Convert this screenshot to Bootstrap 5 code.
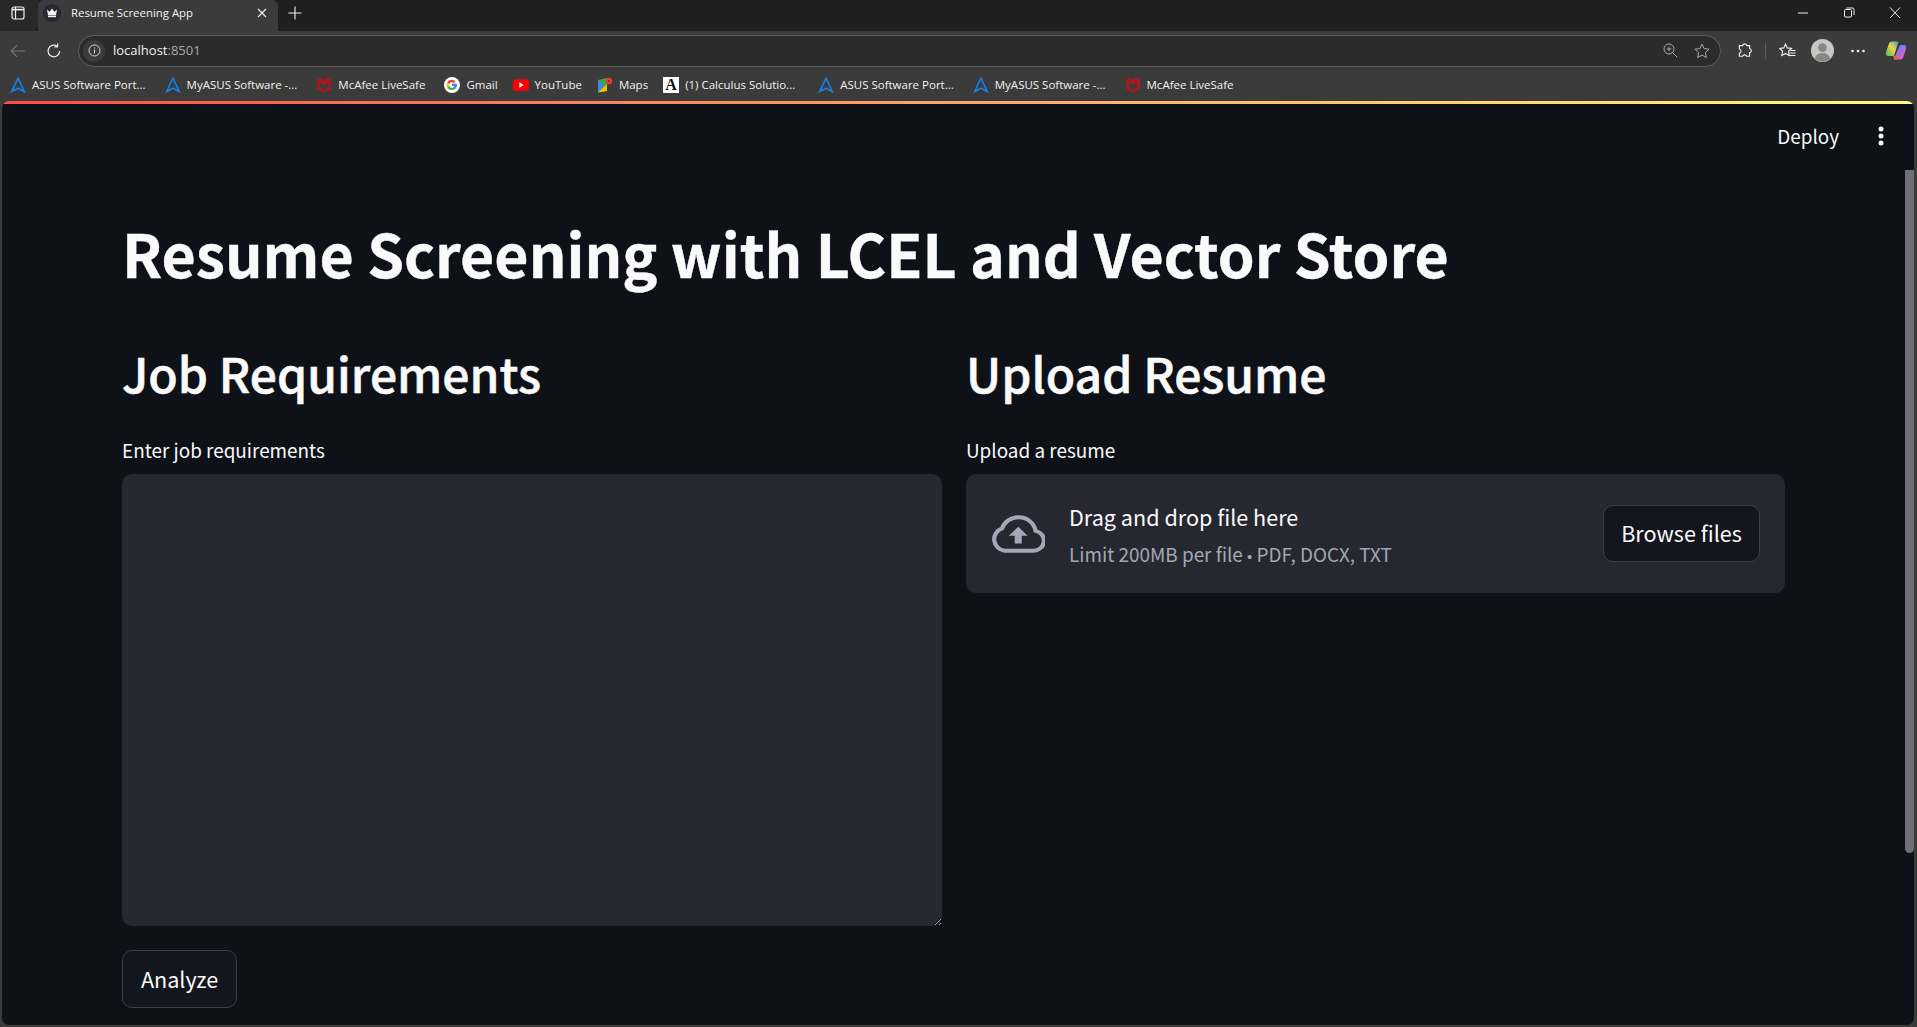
<!DOCTYPE html>
<html lang="en">
<head>
<meta charset="UTF-8">
<title>Resume Screening App</title>
<link rel="stylesheet" href="https://cdn.jsdelivr.net/npm/bootstrap@5.3.0/dist/css/bootstrap.min.css">
<style>
html, body { height: 100%; overflow: hidden; }
body { background: #3b3b3b; font-family: "Noto Sans CJK SC", "Liberation Sans", sans-serif; color: #fafafa; display: flex; flex-direction: column; }
.chrome-font { font-family: "Open Sans", "Liberation Sans", sans-serif; }

.tab-strip { height: 31px; background: #1f1f1f; flex: none; color: #f2f2f2; }
.side-btn { width: 38px; background: #282828; border-radius: 0 0 6px 0; padding: 0 2px 5px 0; }
.browser-tab { width: 240px; background: #3b3b3b; border-radius: 6px 6px 0 0; padding: 0 11px 5px 5px; font-size: 11.4px; }
.tab-fav { width: 18px; height: 18px; border-radius: 50%; background: #262833; margin-right: 10px; }
.tab-title { flex: 1; }
.new-tab { width: 34px; padding-bottom: 5px; }
.win-btns { margin-left: auto; padding: 0 12px 5px 0; gap: 26px; }

.tool-row { height: 39px; background: #3b3b3b; flex: none; padding: 0 10px 0 6px; }
.back-btn, .reload-btn { width: 24px; }
.reload-btn { margin-left: 12px; }
.url-bar { flex: 1; height: 32px; margin-left: 12px; border: 1px solid #5f5f5f; border-radius: 16px; background: #2b2b2b; padding: 0 10px 0 4px; font-size: 13px; }
.url-info { width: 22px; height: 22px; background: #3b3b3b; border-radius: 50%; margin-right: 8px; }
.url-host { color: #f0f0f0; }
.url-port { color: #a8a8a8; }
.url-end { margin-left: auto; gap: 16px; }
.tool-end { margin-left: 16px; }
.tool-sep { width: 1px; height: 16px; background: #5c5c5c; margin-left: 12px; margin-right: 13px; }
.avatar-ico { margin-left: 15px; }
.dots-ico { margin-left: 17px; }
.copilot-ico { margin-left: 20px; }

.bm-row { height: 31px; background: #3b3b3b; flex: none; padding: 0 0 2px 10px; font-size: 11.5px; color: #f2f2f2; }
.bm-item { white-space: nowrap; gap: 6px; margin-right: 19px; }
.bm-tight { margin-right: 15px; }
.bm-wide { margin-right: 23px; }
.bm-row svg { flex: none; }
.bm-letter { width: 16px; height: 16px; flex: none; background: #fff; color: #111; font-family: "Liberation Serif", serif; font-weight: 700; font-size: 16px; line-height: 16px; text-align: center; }

.app-frame { flex: 1; min-height: 0; position: relative; background: #0e1117; margin: 0 3px 2px 2px; border-radius: 7px; overflow: hidden; }
.rainbow { position: absolute; left: 0; right: 0; top: 0; height: 3px; background: linear-gradient(90deg, #ff4b4b, #fffd80); }
.deploy-bar { position: absolute; top: 21px; right: 30px; }
.deploy-txt { font-size: 18.9px; line-height: 27px; margin-right: 39px; }
.scroll-thumb { position: absolute; top: 69px; right: 0; width: 9px; height: 683px; background: #6f7074; border-radius: 0 0 5px 5px; }

.page-wrap { padding: 117px 0 0 120px; }
.page-title { font-size: 59px; font-weight: 700; line-height: 70.8px; margin: 0 0 55.4px; -webkit-text-stroke: .4px #fafafa; }
.col-head { font-size: 48px; font-weight: 500; line-height: 57.6px; margin: 0 0 35px; -webkit-text-stroke: .6px #fafafa; }
.field-label { font-size: 18.9px; line-height: 25px; margin-bottom: 12.4px; }
.two-cols { display: grid; grid-template-columns: 820px 819px; column-gap: 24px; }
.job-area { display: block; width: 820px; height: 452px; background: #262730; border: 0; border-radius: 10px; color: #fafafa; }
.dark-btn { background: #13161e; border: 1px solid #3c3f47; color: #fafafa; border-radius: 10px; font-size: 21.6px; }
.dark-btn:hover { background: #13161e; color: #fafafa; border-color: #3c3f47; }
.analyze-btn { width: 115px; height: 58px; margin-top: 24px; padding: 0; }
.drop-zone { background: #262730; border-radius: 10px; height: 119px; padding: 0 25px; }
.cloud-icon { margin-right: 24px; flex: none; }
.drop-text { padding-top: 5px; }
.drop-main { font-size: 21.6px; line-height: 28px; margin-bottom: 10px; }
.drop-sub { font-size: 18.9px; line-height: 25px; color: #a3a8b4; }
.dot-sep { font-family: "Liberation Sans", sans-serif; font-size: 15px; }
.browse-btn { width: 157px; height: 57px; margin-left: auto; padding: 0; }
</style>
</head>
<body>
  <div class="tab-strip chrome-font d-flex align-items-stretch">
    <div class="side-btn d-flex align-items-center justify-content-center">
      <svg width="14" height="14" viewBox="0 0 14 14" fill="none" stroke="#f2f2f2" stroke-width="1.2"><rect x="1" y="1" width="12" height="12" rx="2"/><path d="M4.500 1v12"/><path d="M1 3.600h12" stroke-width="1.600"/></svg>
    </div>
    <div class="browser-tab d-flex align-items-center">
      <span class="tab-fav d-flex align-items-center justify-content-center">
        <svg width="12" height="10" viewBox="0 0 12 10" fill="#f4f4f4"><path d="M1 1.600l2.600 2.200L6 .6l2.400 3.200L11 1.600 10 7.500H2z"/><rect x="2" y="8" width="8" height="1.200"/></svg>
      </span>
      <span class="tab-title">Resume Screening App</span>
      <svg width="10" height="10" viewBox="0 0 10 10" stroke="#f2f2f2" stroke-width="1.1"><path d="M1 1l8 8M9 1l-8 8"/></svg>
    </div>
    <div class="new-tab d-flex align-items-center justify-content-center">
      <svg width="14" height="14" viewBox="0 0 14 14" stroke="#f2f2f2" stroke-width="1.1"><path d="M7 .5v13M.5 7h13"/></svg>
    </div>
    <div class="win-btns d-flex align-items-center">
      <svg width="20" height="12" viewBox="0 0 20 12" stroke="#eee" stroke-width="1"><path d="M5 6h10"/></svg>
      <svg width="20" height="12" viewBox="0 0 20 12" fill="none" stroke="#eee" stroke-width="1"><rect x="5.500" y="2.500" width="7" height="7.500" rx="1"/><path d="M7.500 1h6a1.500 1.500 0 0 1 1.500 1.500V8"/></svg>
      <svg width="20" height="12" viewBox="0 0 20 12" stroke="#eee" stroke-width="1"><path d="M5 .5l10 10.500M15 .5L5 11"/></svg>
    </div>
  </div>

  <div class="tool-row chrome-font d-flex align-items-center">
    <div class="back-btn d-flex justify-content-center">
      <svg width="16" height="14" viewBox="0 0 16 14" fill="none" stroke="#777" stroke-width="1.1"><path d="M15 7H1.500M7 1.200L1.200 7 7 12.800"/></svg>
    </div>
    <div class="reload-btn d-flex justify-content-center">
      <svg width="16" height="16" viewBox="0 0 16 16" fill="none" stroke="#ececec" stroke-width="1.2"><path d="M13.600 8A5.800 5.800 0 1 1 11.200 3.300"/><path d="M11.600.6v3.300H8.400"/></svg>
    </div>
    <div class="url-bar d-flex align-items-center">
      <span class="url-info d-flex align-items-center justify-content-center">
        <svg width="13" height="13" viewBox="0 0 13 13" fill="none" stroke="#d6d6d6" stroke-width="1"><circle cx="6.500" cy="6.500" r="5.500"/><path d="M6.500 5.600v3.800M6.500 3.400v1.100"/></svg>
      </span>
      <span class="url-host">localhost</span><span class="url-port">:8501</span>
      <div class="url-end d-flex align-items-center">
        <svg width="15" height="15" viewBox="0 0 15 15" fill="none" stroke="#a8a8a8" stroke-width="1"><circle cx="6" cy="6" r="5"/><path d="M9.700 9.700l4.600 4.600M6 3.700v4.600M3.700 6h4.600"/></svg>
        <svg width="16" height="16" viewBox="0 0 16 16" fill="none" stroke="#a8a8a8" stroke-width="1"><path d="M8 1l2.100 4.600 5 .6-3.700 3.400 1 5L8 12.100l-4.400 2.500 1-5L.9 6.200l5-.6z"/></svg>
      </div>
    </div>
    <div class="tool-end d-flex align-items-center">
      <svg width="16" height="16" viewBox="0 0 16 16" fill="none" stroke="#f2f2f2" stroke-width="1.1"><path d="M5.600 2.600a2.200 2.200 0 0 1 4.300 0h2.700v2.900a2.200 2.200 0 0 1 0 4.300v3.500H9.700a2.200 2.200 0 0 0-4.100 0H2.300v-3a2.200 2.200 0 0 0 0-4.300V2.600z"/></svg>
      <span class="tool-sep"></span>
      <svg width="17" height="16" viewBox="0 0 17 16" fill="none" stroke="#f2f2f2" stroke-width="1.1"><path d="M6.500 1l1.800 3.900 4.200.5-3 2.900.8 4.200-3.800-2.100-3.700 2.100.8-4.200-3-2.900 4.200-.5z"/><path d="M11.500 7.500h5M10.500 10h6M9.500 12.500h7"/></svg>
      <svg class="avatar-ico" width="23" height="23" viewBox="0 0 23 23"><circle cx="11.500" cy="11.500" r="11.500" fill="#c9c7c3"/><circle cx="11.500" cy="8.600" r="4.400" fill="#8a8886"/><path d="M3.600 19.500c1.200-3.600 4.400-5.400 7.900-5.400s6.700 1.800 7.900 5.400a11.500 11.500 0 0 1-15.800 0z" fill="#8a8886"/></svg>
      <svg class="dots-ico" width="14" height="4" viewBox="0 0 14 4" fill="#f2f2f2"><circle cx="1.500" cy="2" r="1.300"/><circle cx="7" cy="2" r="1.300"/><circle cx="12.500" cy="2" r="1.300"/></svg>
      <svg class="copilot-ico" width="22" height="21" viewBox="0 0 22 21">
        <defs>
          <linearGradient id="copA" x1="0" y1="1" x2="1" y2="0"><stop offset="0" stop-color="#37c26b"/><stop offset=".55" stop-color="#f5d33c"/><stop offset="1" stop-color="#2f9bf0"/></linearGradient>
          <linearGradient id="copB" x1="0" y1="0" x2="1" y2="1"><stop offset="0" stop-color="#3aa3f5"/><stop offset=".5" stop-color="#a767e8"/><stop offset="1" stop-color="#f56d8d"/></linearGradient>
        </defs>
        <path d="M7 1.500h6.500L9 16H3.400C1.200 16 .3 14.200 1 12.200L4 3.600C4.500 2.200 5.600 1.500 7 1.500z" fill="url(#copA)"/>
        <path d="M15 5h3.600c2.300 0 3.200 1.800 2.500 3.800l-3 8.600C17.600 18.800 16.500 19.500 15.100 19.500H8.500z" fill="url(#copB)"/>
        <path d="M8 16h5l-1 3.500H9.500z" fill="#f2603a"/>
      </svg>
    </div>
  </div>

  <div class="bm-row chrome-font d-flex align-items-center">
    <div class="bm-item d-flex align-items-center"><svg width="16" height="16" viewBox="0 0 16 16" fill="none" stroke="#1a7fe8" stroke-width="1.6"><path d="M8 1.200L1.800 14.500 8 11.200l6.200 3.300z"/></svg>ASUS Software Port...</div>
    <div class="bm-item d-flex align-items-center"><svg width="16" height="16" viewBox="0 0 16 16" fill="none" stroke="#1a7fe8" stroke-width="1.6"><path d="M8 1.200L1.800 14.500 8 11.200l6.200 3.300z"/></svg>MyASUS Software -...</div>
    <div class="bm-item d-flex align-items-center"><svg width="16" height="16" viewBox="0 0 14 16" fill="#a5191f"><path d="M0 2.500L3.500.5 7 3 10.500.5 14 2.500V12l-7 4-7-4zM3 5.500v5l4 2.300 4-2.300v-5L7 8z"/></svg>McAfee LiveSafe</div>
    <div class="bm-item bm-tight d-flex align-items-center"><svg width="16" height="16" viewBox="0 0 16 16"><circle cx="8" cy="8" r="8" fill="#fff"/><path d="M12.800 6.800H8v2.300h2.700a2.900 2.900 0 0 1-5.400-.1L3.300 10.500a5.100 5.100 0 0 0 9.500-2.500z" fill="#34a853"/><path d="M5.300 9a2.900 2.900 0 0 1 0-2l-2-1.500a5.100 5.100 0 0 0 0 5z" fill="#fbbc05"/><path d="M3.300 5.500l2 1.500A2.900 2.900 0 0 1 10 6l1.600-1.600a5.100 5.100 0 0 0-8.300 1.100z" fill="#ea4335"/><path d="M12.800 6.800H8v2.300h2.700a2.700 2.700 0 0 1-1 1.300l1.700 1.400a5.200 5.200 0 0 0 1.400-5z" fill="#4285f4"/></svg>Gmail</div>
    <div class="bm-item bm-tight d-flex align-items-center"><svg width="16" height="12" viewBox="0 0 15 11"><rect width="15" height="11" rx="3" fill="#f00"/><path d="M6 3l4 2.500L6 8z" fill="#fff"/></svg>YouTube</div>
    <div class="bm-item bm-tight d-flex align-items-center"><svg width="16" height="16" viewBox="0 0 16 16"><path d="M1 3l9-2v13l-9 1.500z" fill="#34a853"/><path d="M1 15.500L10 7v7z" fill="#fbbc05"/><path d="M1 3l6 6-6 6z" fill="#4285f4"/><circle cx="11.800" cy="4" r="3.200" fill="#ea4335"/><circle cx="11.800" cy="4" r="1.100" fill="#a11"/></svg>Maps</div>
    <div class="bm-item bm-wide d-flex align-items-center"><span class="bm-letter">A</span>(1) Calculus Solutio...</div>
    <div class="bm-item d-flex align-items-center"><svg width="16" height="16" viewBox="0 0 16 16" fill="none" stroke="#1a7fe8" stroke-width="1.6"><path d="M8 1.200L1.800 14.500 8 11.200l6.200 3.300z"/></svg>ASUS Software Port...</div>
    <div class="bm-item d-flex align-items-center"><svg width="16" height="16" viewBox="0 0 16 16" fill="none" stroke="#1a7fe8" stroke-width="1.6"><path d="M8 1.200L1.800 14.500 8 11.200l6.200 3.300z"/></svg>MyASUS Software -...</div>
    <div class="bm-item d-flex align-items-center"><svg width="16" height="16" viewBox="0 0 14 16" fill="#a5191f"><path d="M0 2.500L3.500.5 7 3 10.500.5 14 2.500V12l-7 4-7-4zM3 5.500v5l4 2.300 4-2.300v-5L7 8z"/></svg>McAfee LiveSafe</div>
  </div>

  <div class="app-frame">
    <div class="rainbow"></div>
    <div class="deploy-bar d-flex align-items-center">
      <span class="deploy-txt">Deploy</span>
      <svg width="6" height="20" viewBox="0 0 6 20" fill="#fafafa"><circle cx="3" cy="3" r="2.500"/><circle cx="3" cy="10" r="2.500"/><circle cx="3" cy="17" r="2.500"/></svg>
    </div>
    <div class="scroll-thumb"></div>
    <div class="page-wrap">
      <h1 class="page-title">Resume Screening with LCEL and Vector Store</h1>
      <div class="two-cols">
        <div>
          <h2 class="col-head">Job Requirements</h2>
          <div class="field-label">Enter job requirements</div>
          <textarea class="job-area" aria-label="Enter job requirements"></textarea>
          <button type="button" class="btn dark-btn analyze-btn">Analyze</button>
        </div>
        <div>
          <h2 class="col-head">Upload Resume</h2>
          <div class="field-label">Upload a resume</div>
          <div class="drop-zone d-flex align-items-center">
            <svg class="cloud-icon" width="54" height="38" viewBox="0.4 0 23 17" preserveAspectRatio="none" fill="none"><path d="M6.200 16h12.300a4.500 4.500 0 0 0 .9-8.900A7.300 7.300 0 0 0 12 1a7.300 7.300 0 0 0-6.900 5A5.200 5.200 0 0 0 6.200 16z" stroke="#a3a8b8" stroke-width="1.800"/><path d="M12 5.300l4 4h-2.500v3.400h-3V9.300H8z" fill="#a3a8b8"/></svg>
            <div class="drop-text">
              <div class="drop-main">Drag and drop file here</div>
              <div class="drop-sub">Limit 200MB per file <span class="dot-sep">•</span> PDF, DOCX, TXT</div>
            </div>
            <button type="button" class="btn dark-btn browse-btn">Browse files</button>
          </div>
        </div>
      </div>
    </div>
  </div>
</body>
</html>
